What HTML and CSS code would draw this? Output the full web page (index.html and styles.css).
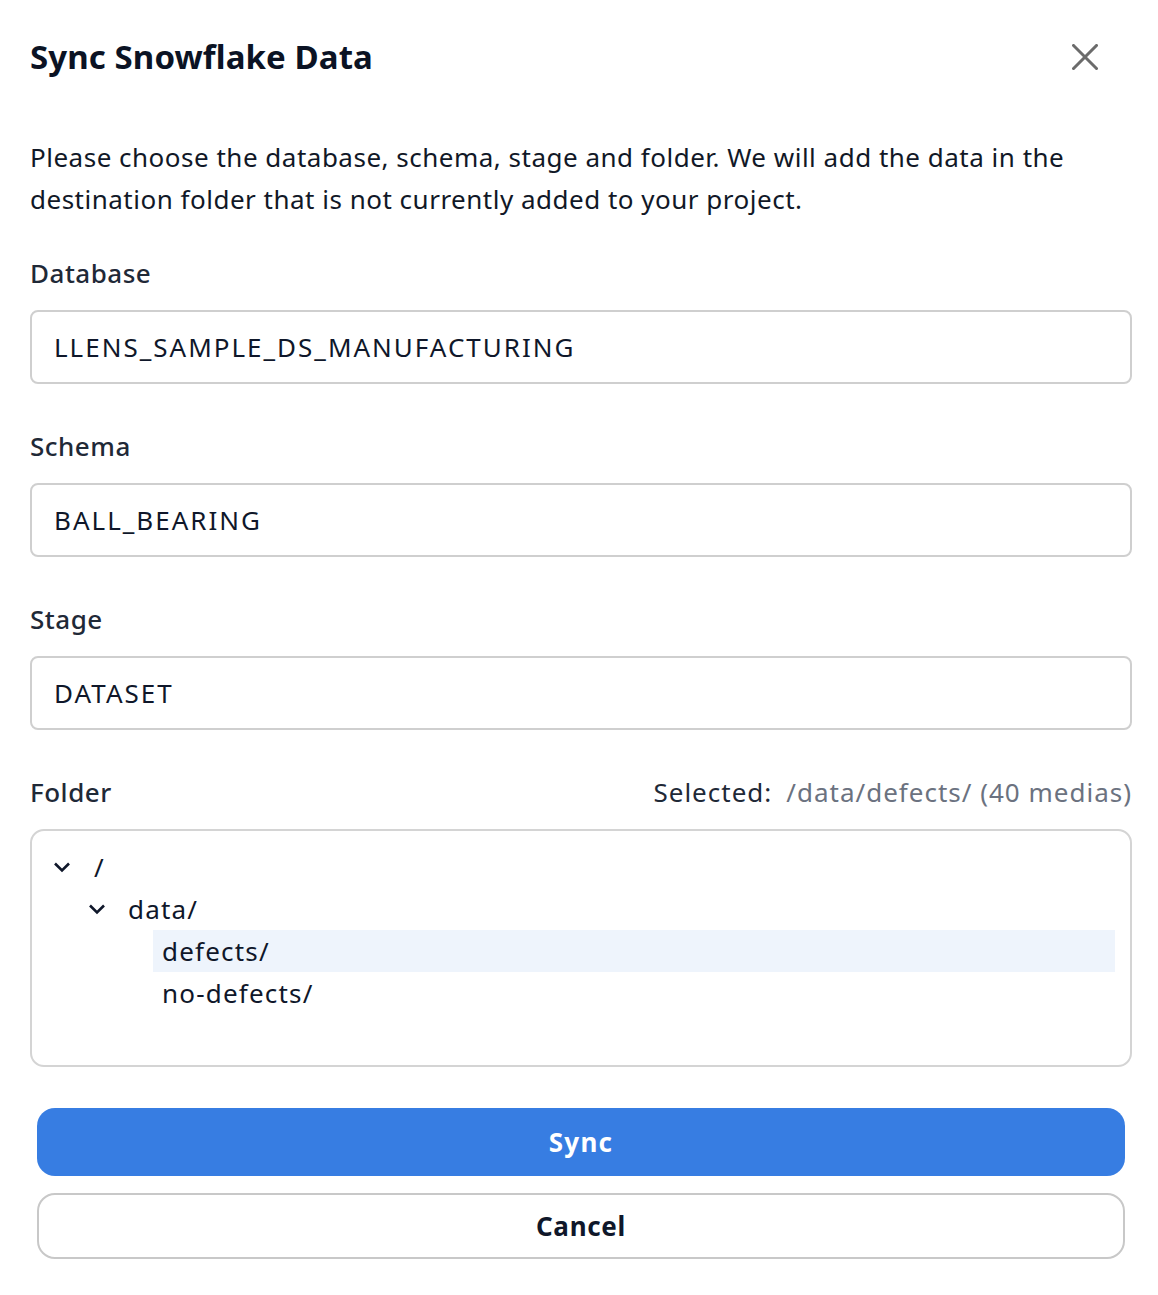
FILE: index.html
```html
<!DOCTYPE html>
<html>
<head>
<meta charset="utf-8">
<link rel="stylesheet" href="styles.css">
</head>
<body>
<div class="modal">
  <div class="header">
    <h1 class="title">Sync Snowflake Data</h1>
    <svg class="close" viewBox="0 0 26 26" width="26" height="26"><path d="M1.5 1.5 L24.5 24.5 M24.5 1.5 L1.5 24.5" stroke="#6b6b6b" stroke-width="3" stroke-linecap="square" fill="none"/></svg>
  </div>
  <p class="desc">Please choose the database, schema, stage and folder. We will add the data in the destination folder that is not currently added to your project.</p>

  <div class="field">
    <div class="label">Database</div>
    <div class="input">LLENS_SAMPLE_DS_MANUFACTURING</div>
  </div>
  <div class="field">
    <div class="label">Schema</div>
    <div class="input">BALL_BEARING</div>
  </div>
  <div class="field">
    <div class="label">Stage</div>
    <div class="input">DATASET</div>
  </div>
  <div class="field">
    <div class="label-row">
      <div class="label">Folder</div>
      <div class="selected"><span class="sel-key">Selected:</span><span class="sel-val">/data/defects/ (40 medias)</span></div>
    </div>
    <div class="tree">
      <div class="row lvl0">
        <svg class="chev" viewBox="0 0 18 12" width="18" height="12"><path d="M2 2.5 L9 9.5 L16 2.5" stroke="#0f172a" stroke-width="2.6" fill="none"/></svg>
        <span class="name">/</span>
      </div>
      <div class="row lvl1">
        <svg class="chev" viewBox="0 0 18 12" width="18" height="12"><path d="M2 2.5 L9 9.5 L16 2.5" stroke="#0f172a" stroke-width="2.6" fill="none"/></svg>
        <span class="name">data/</span>
      </div>
      <div class="row leaf active"><span class="name">defects/</span></div>
      <div class="row leaf"><span class="name">no-defects/</span></div>
    </div>
  </div>

  <div class="actions">
    <button class="btn primary">Sync</button>
    <button class="btn secondary">Cancel</button>
  </div>
</div>
</body>
</html>
```

FILE: styles.css
```css
* { box-sizing: border-box; }
html, body { margin: 0; padding: 0; background: #fff; }
body { font-family: "Noto Sans", Lato, sans-serif; color: #0f172a; }

.modal { padding: 29px 26px 0 30px; }

.header { display: flex; align-items: center; justify-content: space-between; height: 56px; }
.title { margin: 0; font-size: 33px; font-weight: 700; color: #0b1324; line-height: 56px; letter-spacing: 0.1px; }
.close { margin-right: 34px; display: block; }

.desc { margin: 51px 0 0 0; font-size: 26px; line-height: 42px; color: #111827; letter-spacing: 0.5px; }

.field { margin-top: 37px; }
.field + .field { margin-top: 46px; }

.label { font-size: 26px; line-height: 32px; font-weight: 500; color: #1f2937; letter-spacing: 0.5px; }
.label-row { display: flex; justify-content: space-between; align-items: center; }
.selected { font-size: 26px; line-height: 32px; letter-spacing: 1px; }
.sel-key { color: #1f2937; margin-right: 14px; }
.sel-val { color: #6b7280; }

.input { margin-top: 21px; height: 74px; border: 2px solid #cfcfcf; border-radius: 8px; padding: 0 22px; display: flex; align-items: center; font-size: 26px; color: #0f172a; letter-spacing: 2px; }

.tree { margin-top: 21px; height: 238px; border: 2px solid #d4d4d4; border-radius: 14px; padding: 15px 15px 0 0; }
.row { height: 42px; display: flex; align-items: center; font-size: 26px; color: #0f172a; letter-spacing: 1.2px; }
.lvl0 { padding-left: 21px; }
.lvl1 { padding-left: 56px; }
.chev { display: block; margin-right: 22px; }
.lvl0 .chev { margin-right: 23px; }
.leaf { margin-left: 121px; padding-left: 9px; }
.active { background: #eef4fc; }

.actions { margin: 41px 7px 0 7px; display: flex; flex-direction: column; gap: 17px; }
.btn { font-family: "Noto Sans", Lato, sans-serif; font-size: 26px; font-weight: 700; border-radius: 18px; cursor: pointer; }
.primary { height: 68px; background: #377de2; color: #fff; border: none; letter-spacing: 1.2px; }
.secondary { height: 66px; background: #fff; color: #0f172a; border: 2px solid #c8c8c8; letter-spacing: 0.7px; }
```
